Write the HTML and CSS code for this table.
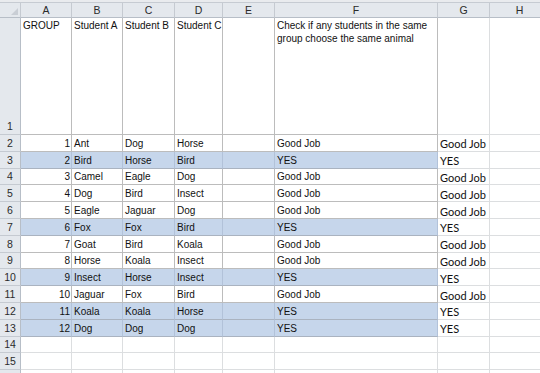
FILE: index.html
```html
<!DOCTYPE html>
<html>
<head>
<meta charset="utf-8">
<link rel="stylesheet" href="styles.css">
</head>
<body>
<div class="topstrip"></div>
<div class="sheet">
  <div class="ch corner"><span class="tri"></span></div>
  <div class="ch">A</div><div class="ch">B</div><div class="ch">C</div><div class="ch">D</div><div class="ch">E</div><div class="ch">F</div><div class="ch">G</div><div class="ch">H</div>

  <div class="rh">1</div>
  <div class="c b top">GROUP</div><div class="c b top">Student A</div><div class="c b top">Student B</div><div class="c b top">Student C</div><div class="c b top"></div><div class="c b top wrap">Check if any students in the same group choose the same animal</div><div class="c"></div><div class="c"></div>

  <div class="rh">2</div>
  <div class="c b n">1</div><div class="c b">Ant</div><div class="c b">Dog</div><div class="c b">Horse</div><div class="c b"></div><div class="c b">Good Job</div><div class="c g">Good Job</div><div class="c"></div>

  <div class="rh">3</div>
  <div class="c b n hl">2</div><div class="c b hl">Bird</div><div class="c b hl">Horse</div><div class="c b hl">Bird</div><div class="c b hl"></div><div class="c b hl">YES</div><div class="c g">YES</div><div class="c"></div>

  <div class="rh">4</div>
  <div class="c b n">3</div><div class="c b">Camel</div><div class="c b">Eagle</div><div class="c b">Dog</div><div class="c b"></div><div class="c b">Good Job</div><div class="c g">Good Job</div><div class="c"></div>

  <div class="rh">5</div>
  <div class="c b n">4</div><div class="c b">Dog</div><div class="c b">Bird</div><div class="c b">Insect</div><div class="c b"></div><div class="c b">Good Job</div><div class="c g">Good Job</div><div class="c"></div>

  <div class="rh">6</div>
  <div class="c b n">5</div><div class="c b">Eagle</div><div class="c b">Jaguar</div><div class="c b">Dog</div><div class="c b"></div><div class="c b">Good Job</div><div class="c g">Good Job</div><div class="c"></div>

  <div class="rh">7</div>
  <div class="c b n hl">6</div><div class="c b hl">Fox</div><div class="c b hl">Fox</div><div class="c b hl">Bird</div><div class="c b hl"></div><div class="c b hl">YES</div><div class="c g">YES</div><div class="c"></div>

  <div class="rh">8</div>
  <div class="c b n">7</div><div class="c b">Goat</div><div class="c b">Bird</div><div class="c b">Koala</div><div class="c b"></div><div class="c b">Good Job</div><div class="c g">Good Job</div><div class="c"></div>

  <div class="rh">9</div>
  <div class="c b n">8</div><div class="c b">Horse</div><div class="c b">Koala</div><div class="c b">Insect</div><div class="c b"></div><div class="c b">Good Job</div><div class="c g">Good Job</div><div class="c"></div>

  <div class="rh">10</div>
  <div class="c b n hl">9</div><div class="c b hl">Insect</div><div class="c b hl">Horse</div><div class="c b hl">Insect</div><div class="c b hl"></div><div class="c b hl">YES</div><div class="c g">YES</div><div class="c"></div>

  <div class="rh">11</div>
  <div class="c b n">10</div><div class="c b">Jaguar</div><div class="c b">Fox</div><div class="c b">Bird</div><div class="c b"></div><div class="c b">Good Job</div><div class="c g">Good Job</div><div class="c"></div>

  <div class="rh">12</div>
  <div class="c b n hl">11</div><div class="c b hl">Koala</div><div class="c b hl">Koala</div><div class="c b hl">Horse</div><div class="c b hl"></div><div class="c b hl">YES</div><div class="c g">YES</div><div class="c"></div>

  <div class="rh">13</div>
  <div class="c b n hl">12</div><div class="c b hl">Dog</div><div class="c b hl">Dog</div><div class="c b hl">Dog</div><div class="c b hl"></div><div class="c b hl">YES</div><div class="c g">YES</div><div class="c"></div>

  <div class="rh">14</div>
  <div class="c"></div><div class="c"></div><div class="c"></div><div class="c"></div><div class="c"></div><div class="c"></div><div class="c"></div><div class="c"></div>

  <div class="rh">15</div>
  <div class="c"></div><div class="c"></div><div class="c"></div><div class="c"></div><div class="c"></div><div class="c"></div><div class="c"></div><div class="c"></div>

  <div class="rh"></div>
  <div class="c"></div><div class="c"></div><div class="c"></div><div class="c"></div><div class="c"></div><div class="c"></div><div class="c"></div><div class="c"></div>
</div>
</body>
</html>
```

FILE: styles.css
```css
html, body {
  margin: 0;
  padding: 0;
  background: #ffffff;
  overflow: hidden;
  width: 540px;
  height: 373px;
}

.topstrip {
  height: 2px;
  background: #e9ebee;
  border-bottom: 1px solid #c6cbd2;
}

.sheet {
  display: grid;
  grid-template-columns: 21px 51px 51px 52px 48px 52px 163px 52px 60px;
  grid-template-rows: 15px 117px repeat(15, 16.8px);
  font-family: "Liberation Sans", Arial, sans-serif;
  font-size: 10px;
  color: #111;
}

.ch {
  box-sizing: border-box;
  background: #e4e8ed;
  border-right: 1px solid #c5cad1;
  border-bottom: 1px solid #b7bec7;
  color: #2b2b2b;
  font-size: 10.5px;
  line-height: 14px;
  text-align: center;
}

.corner {
  position: relative;
  background: #e4e8ed;
}

.tri {
  position: absolute;
  right: 2px;
  bottom: 2px;
  width: 0;
  height: 0;
  border-left: 7px solid transparent;
  border-bottom: 7px solid #c9ced5;
}

.rh {
  box-sizing: border-box;
  background: #e4e8ed;
  border-right: 1px solid #b7bec7;
  border-bottom: 1px solid #c5cad1;
  color: #2b2b2b;
  font-size: 10.5px;
  line-height: 15px;
  display: flex;
  align-items: flex-end;
  justify-content: center;
}

.c {
  box-sizing: border-box;
  border-right: 1px solid #dcdee0;
  border-bottom: 1px solid #dcdee0;
  padding: 0 1px 0 2px;
  line-height: 15px;
  white-space: nowrap;
  overflow: hidden;
  display: flex;
  align-items: flex-end;
}

.b {
  border-right-color: #bcbcbc;
  border-bottom-color: #bcbcbc;
}

.top {
  align-items: flex-start;
  line-height: 13px;
  padding-top: 1px;
}

.wrap {
  white-space: normal;
}

.n {
  justify-content: flex-end;
}

.hl {
  background: #c6d6eb;
  border-right-color: #b2c2d9;
  border-bottom-color: #aab3c0;
}

.g {
  font-family: Lato, "Liberation Sans", sans-serif;
  font-size: 11px;
  color: #111;
  line-height: 14px;
  padding-left: 2px;
  align-items: center;
  padding-top: 3px;
}
```
